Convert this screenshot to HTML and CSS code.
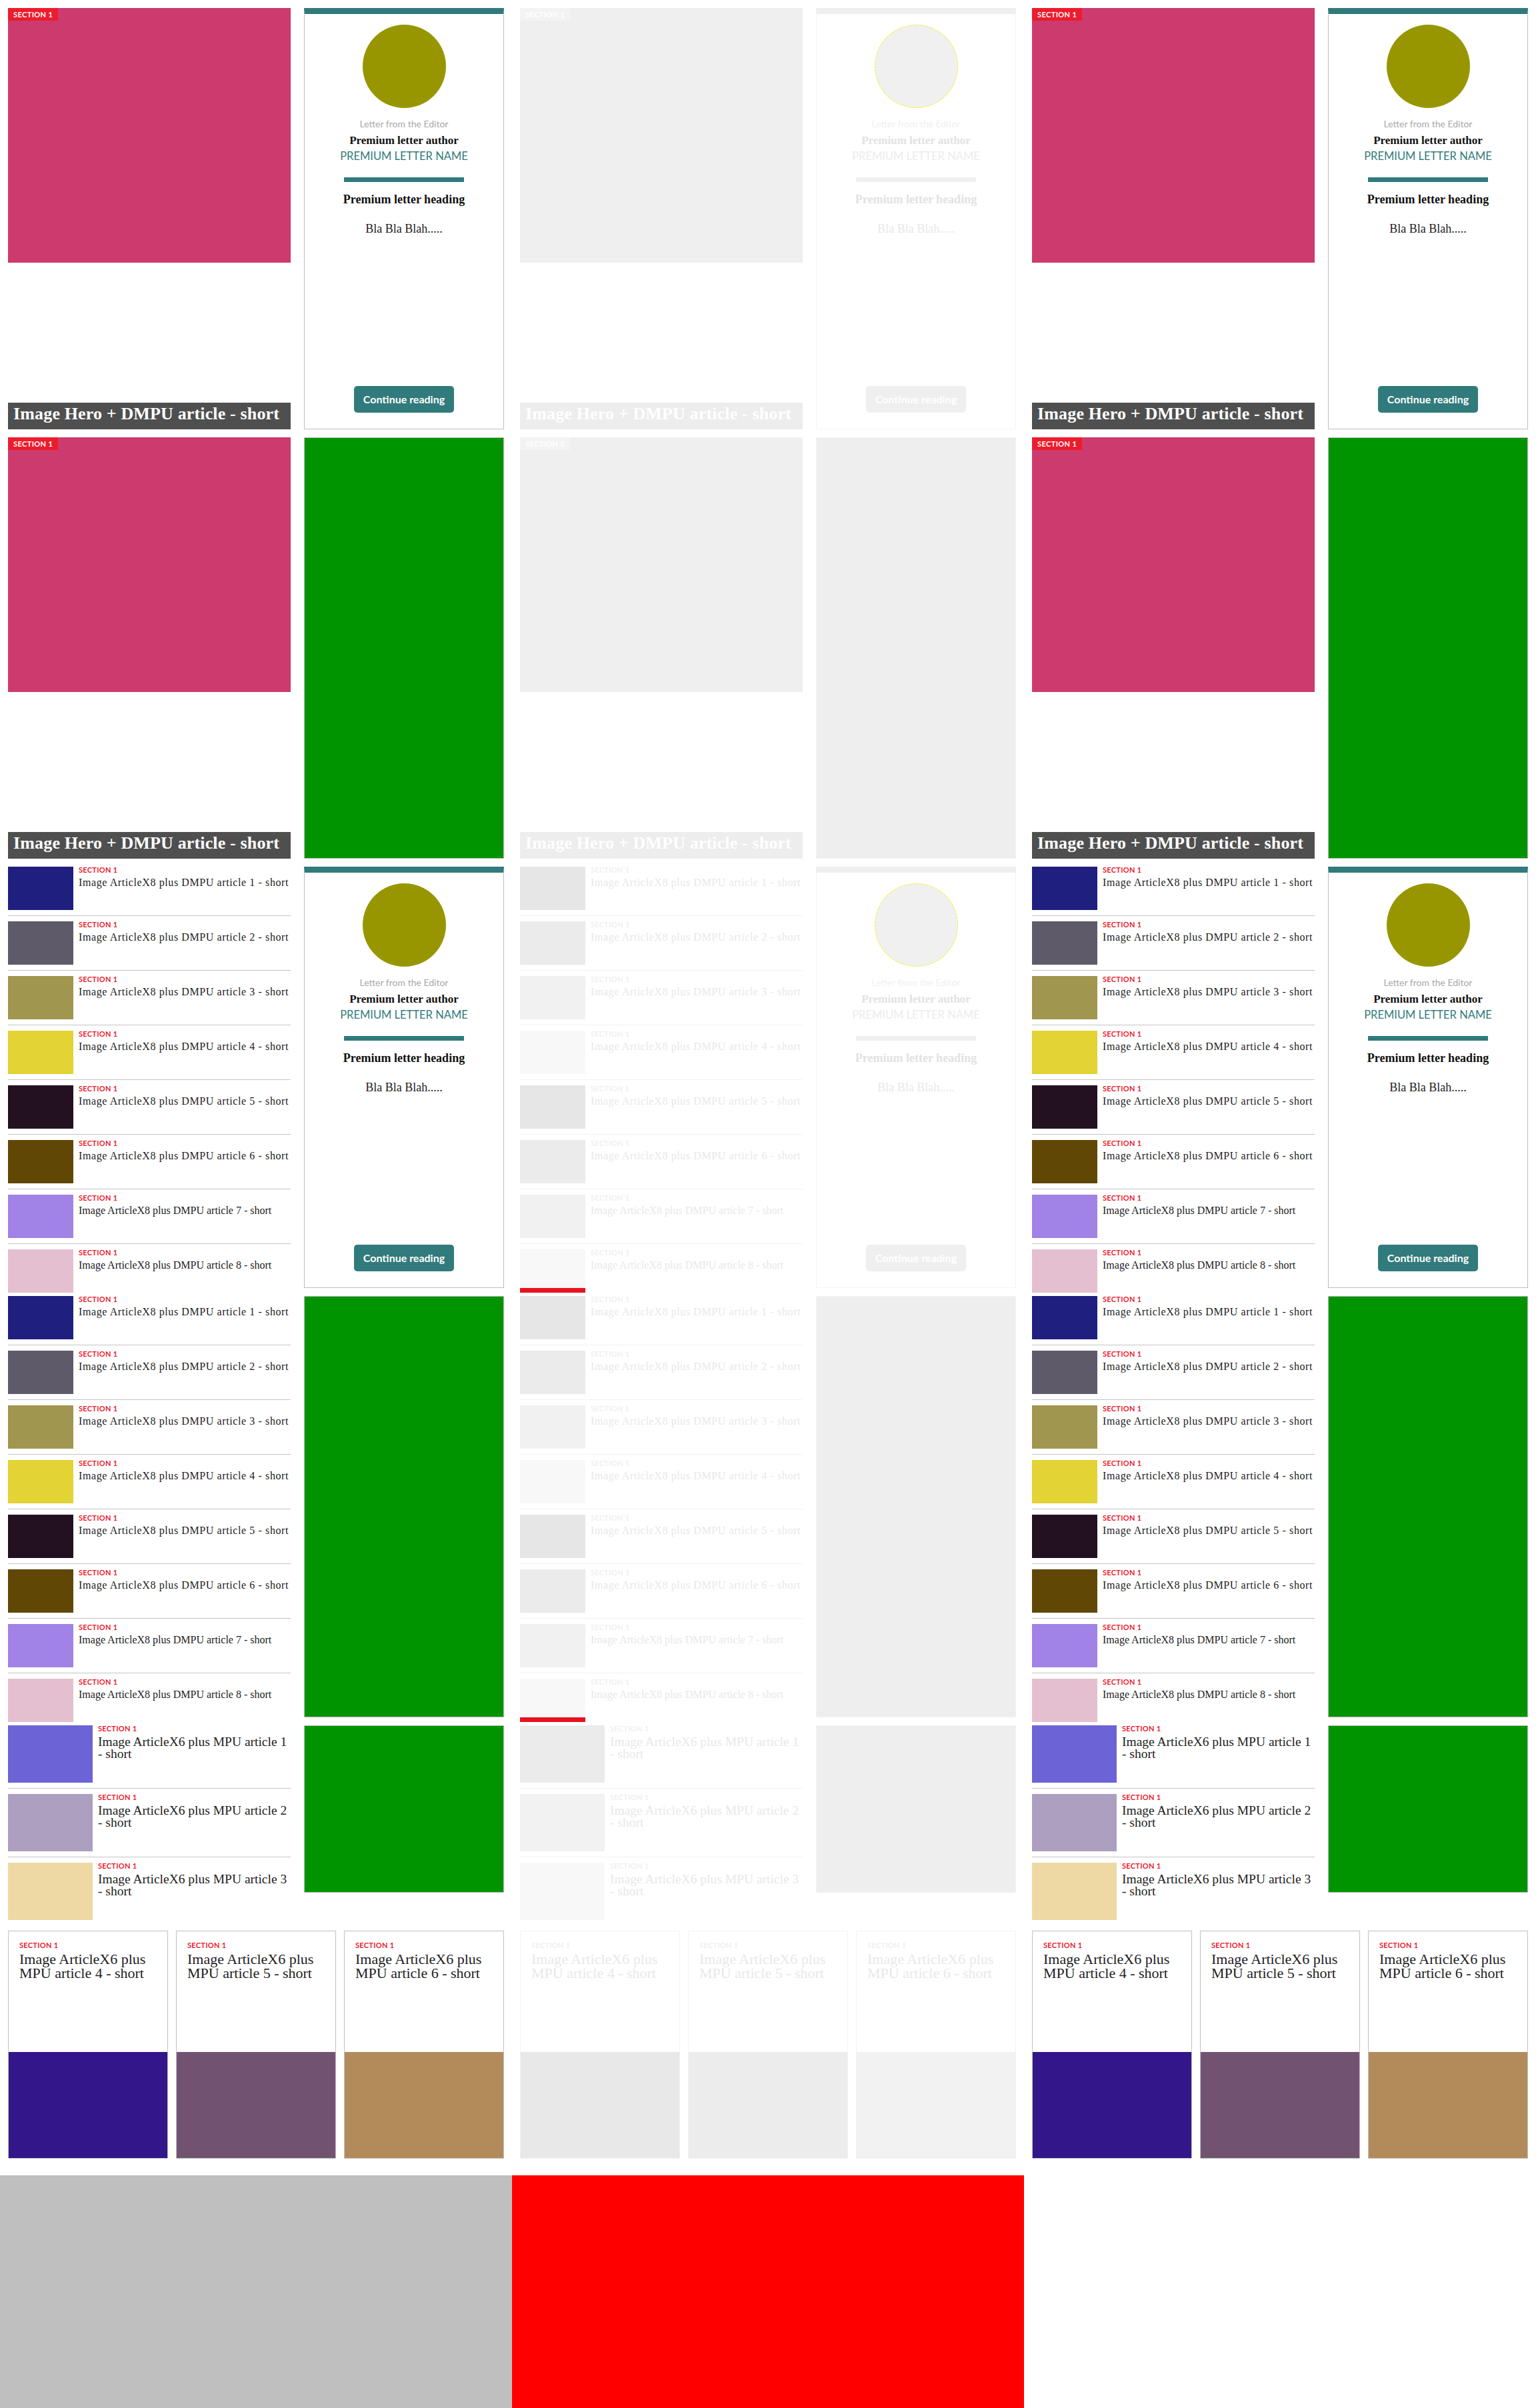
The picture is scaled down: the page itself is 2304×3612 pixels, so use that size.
FILE: index.html
```html
<!DOCTYPE html>
<html lang="en">
<head>
<meta charset="utf-8">
<title>Slices</title>
<link rel="stylesheet" href="styles.css">
</head>
<body>
<div class="page">
  <div class="grid">
    <!-- COLUMN 1 -->
    <section class="col">
      <div class="row">
        <article class="hero">
          <div class="hero-img"><span class="tag">SECTION 1</span></div>
          <h2 class="hero-title">Image Hero + DMPU article - short</h2>
        </article>
        <aside class="letter">
          <div class="avatar"></div>
          <p class="letter-kicker">Letter from the Editor</p>
          <p class="letter-author">Premium letter author</p>
          <p class="letter-name">PREMIUM LETTER NAME</p>
          <div class="letter-rule"></div>
          <h3 class="letter-heading">Premium letter heading</h3>
          <p class="letter-blurb">Bla Bla Blah.....</p>
          <span class="btn">Continue reading</span>
        </aside>
      </div>
      <div class="row">
        <article class="hero">
          <div class="hero-img"><span class="tag">SECTION 1</span></div>
          <h2 class="hero-title">Image Hero + DMPU article - short</h2>
        </article>
        <div class="dmpu"></div>
      </div>
      <div class="row">
        <ul class="list8">
          <li class="item8"><div class="thumb8 s1"></div><div class="item-text"><span class="label">SECTION 1</span><h4 class="t8">Image ArticleX8 plus DMPU article 1 - short</h4></div></li>
          <li class="item8"><div class="thumb8 s2"></div><div class="item-text"><span class="label">SECTION 1</span><h4 class="t8">Image ArticleX8 plus DMPU article 2 - short</h4></div></li>
          <li class="item8"><div class="thumb8 s3"></div><div class="item-text"><span class="label">SECTION 1</span><h4 class="t8">Image ArticleX8 plus DMPU article 3 - short</h4></div></li>
          <li class="item8"><div class="thumb8 s4"></div><div class="item-text"><span class="label">SECTION 1</span><h4 class="t8">Image ArticleX8 plus DMPU article 4 - short</h4></div></li>
          <li class="item8"><div class="thumb8 s5"></div><div class="item-text"><span class="label">SECTION 1</span><h4 class="t8">Image ArticleX8 plus DMPU article 5 - short</h4></div></li>
          <li class="item8"><div class="thumb8 s6"></div><div class="item-text"><span class="label">SECTION 1</span><h4 class="t8">Image ArticleX8 plus DMPU article 6 - short</h4></div></li>
          <li class="item8"><div class="thumb8 s7"></div><div class="item-text"><span class="label">SECTION 1</span><h4 class="t8 t8--tight">Image ArticleX8 plus DMPU article 7 - short</h4></div></li>
          <li class="item8"><div class="thumb8 s8"></div><div class="item-text"><span class="label">SECTION 1</span><h4 class="t8 t8--tight">Image ArticleX8 plus DMPU article 8 - short</h4></div></li>
        </ul>
        <aside class="letter">
          <div class="avatar"></div>
          <p class="letter-kicker">Letter from the Editor</p>
          <p class="letter-author">Premium letter author</p>
          <p class="letter-name">PREMIUM LETTER NAME</p>
          <div class="letter-rule"></div>
          <h3 class="letter-heading">Premium letter heading</h3>
          <p class="letter-blurb">Bla Bla Blah.....</p>
          <span class="btn">Continue reading</span>
        </aside>
      </div>
      <div class="row">
        <ul class="list8">
          <li class="item8"><div class="thumb8 s1"></div><div class="item-text"><span class="label">SECTION 1</span><h4 class="t8">Image ArticleX8 plus DMPU article 1 - short</h4></div></li>
          <li class="item8"><div class="thumb8 s2"></div><div class="item-text"><span class="label">SECTION 1</span><h4 class="t8">Image ArticleX8 plus DMPU article 2 - short</h4></div></li>
          <li class="item8"><div class="thumb8 s3"></div><div class="item-text"><span class="label">SECTION 1</span><h4 class="t8">Image ArticleX8 plus DMPU article 3 - short</h4></div></li>
          <li class="item8"><div class="thumb8 s4"></div><div class="item-text"><span class="label">SECTION 1</span><h4 class="t8">Image ArticleX8 plus DMPU article 4 - short</h4></div></li>
          <li class="item8"><div class="thumb8 s5"></div><div class="item-text"><span class="label">SECTION 1</span><h4 class="t8">Image ArticleX8 plus DMPU article 5 - short</h4></div></li>
          <li class="item8"><div class="thumb8 s6"></div><div class="item-text"><span class="label">SECTION 1</span><h4 class="t8">Image ArticleX8 plus DMPU article 6 - short</h4></div></li>
          <li class="item8"><div class="thumb8 s7"></div><div class="item-text"><span class="label">SECTION 1</span><h4 class="t8 t8--tight">Image ArticleX8 plus DMPU article 7 - short</h4></div></li>
          <li class="item8"><div class="thumb8 s8"></div><div class="item-text"><span class="label">SECTION 1</span><h4 class="t8 t8--tight">Image ArticleX8 plus DMPU article 8 - short</h4></div></li>
        </ul>
        <div class="dmpu"></div>
      </div>
      <div class="row row--mpu">
        <ul class="list6">
          <li class="item6"><div class="thumb6 m1"></div><div class="item-text"><span class="label">SECTION 1</span><h4 class="t6">Image ArticleX6 plus MPU article 1 - short</h4></div></li>
          <li class="item6"><div class="thumb6 m2"></div><div class="item-text"><span class="label">SECTION 1</span><h4 class="t6">Image ArticleX6 plus MPU article 2 - short</h4></div></li>
          <li class="item6"><div class="thumb6 m3"></div><div class="item-text"><span class="label">SECTION 1</span><h4 class="t6">Image ArticleX6 plus MPU article 3 - short</h4></div></li>
        </ul>
        <div class="mpu"></div>
      </div>
      <div class="cards">
        <article class="card"><div class="card-body"><span class="label">SECTION 1</span><h4 class="t-card">Image ArticleX6 plus MPU article 4 - short</h4></div><div class="card-img m4"></div></article>
        <article class="card"><div class="card-body"><span class="label">SECTION 1</span><h4 class="t-card">Image ArticleX6 plus MPU article 5 - short</h4></div><div class="card-img m5"></div></article>
        <article class="card"><div class="card-body"><span class="label">SECTION 1</span><h4 class="t-card">Image ArticleX6 plus MPU article 6 - short</h4></div><div class="card-img m6"></div></article>
      </div>
    </section>

    <!-- COLUMN 2 (loading skeleton) -->
    <section class="col col--skel">
      <div class="row">
        <article class="hero">
          <div class="hero-img"><span class="tag">SECTION 1</span></div>
          <h2 class="hero-title">Image Hero + DMPU article - short</h2>
        </article>
        <aside class="letter">
          <div class="avatar"></div>
          <p class="letter-kicker">Letter from the Editor</p>
          <p class="letter-author">Premium letter author</p>
          <p class="letter-name">PREMIUM LETTER NAME</p>
          <div class="letter-rule"></div>
          <h3 class="letter-heading">Premium letter heading</h3>
          <p class="letter-blurb">Bla Bla Blah.....</p>
          <span class="btn">Continue reading</span>
        </aside>
      </div>
      <div class="row">
        <article class="hero">
          <div class="hero-img"><span class="tag">SECTION 1</span></div>
          <h2 class="hero-title">Image Hero + DMPU article - short</h2>
        </article>
        <div class="dmpu"></div>
      </div>
      <div class="row">
        <ul class="list8">
          <li class="item8"><div class="thumb8 s1"></div><div class="item-text"><span class="label">SECTION 1</span><h4 class="t8">Image ArticleX8 plus DMPU article 1 - short</h4></div></li>
          <li class="item8"><div class="thumb8 s2"></div><div class="item-text"><span class="label">SECTION 1</span><h4 class="t8">Image ArticleX8 plus DMPU article 2 - short</h4></div></li>
          <li class="item8"><div class="thumb8 s3"></div><div class="item-text"><span class="label">SECTION 1</span><h4 class="t8">Image ArticleX8 plus DMPU article 3 - short</h4></div></li>
          <li class="item8"><div class="thumb8 s4"></div><div class="item-text"><span class="label">SECTION 1</span><h4 class="t8">Image ArticleX8 plus DMPU article 4 - short</h4></div></li>
          <li class="item8"><div class="thumb8 s5"></div><div class="item-text"><span class="label">SECTION 1</span><h4 class="t8">Image ArticleX8 plus DMPU article 5 - short</h4></div></li>
          <li class="item8"><div class="thumb8 s6"></div><div class="item-text"><span class="label">SECTION 1</span><h4 class="t8">Image ArticleX8 plus DMPU article 6 - short</h4></div></li>
          <li class="item8"><div class="thumb8 s7"></div><div class="item-text"><span class="label">SECTION 1</span><h4 class="t8 t8--tight">Image ArticleX8 plus DMPU article 7 - short</h4></div></li>
          <li class="item8"><div class="thumb8 s8"></div><div class="item-text"><span class="label">SECTION 1</span><h4 class="t8 t8--tight">Image ArticleX8 plus DMPU article 8 - short</h4></div></li>
        </ul>
        <aside class="letter">
          <div class="avatar"></div>
          <p class="letter-kicker">Letter from the Editor</p>
          <p class="letter-author">Premium letter author</p>
          <p class="letter-name">PREMIUM LETTER NAME</p>
          <div class="letter-rule"></div>
          <h3 class="letter-heading">Premium letter heading</h3>
          <p class="letter-blurb">Bla Bla Blah.....</p>
          <span class="btn">Continue reading</span>
        </aside>
      </div>
      <div class="row">
        <ul class="list8">
          <li class="item8"><div class="thumb8 s1"></div><div class="item-text"><span class="label">SECTION 1</span><h4 class="t8">Image ArticleX8 plus DMPU article 1 - short</h4></div></li>
          <li class="item8"><div class="thumb8 s2"></div><div class="item-text"><span class="label">SECTION 1</span><h4 class="t8">Image ArticleX8 plus DMPU article 2 - short</h4></div></li>
          <li class="item8"><div class="thumb8 s3"></div><div class="item-text"><span class="label">SECTION 1</span><h4 class="t8">Image ArticleX8 plus DMPU article 3 - short</h4></div></li>
          <li class="item8"><div class="thumb8 s4"></div><div class="item-text"><span class="label">SECTION 1</span><h4 class="t8">Image ArticleX8 plus DMPU article 4 - short</h4></div></li>
          <li class="item8"><div class="thumb8 s5"></div><div class="item-text"><span class="label">SECTION 1</span><h4 class="t8">Image ArticleX8 plus DMPU article 5 - short</h4></div></li>
          <li class="item8"><div class="thumb8 s6"></div><div class="item-text"><span class="label">SECTION 1</span><h4 class="t8">Image ArticleX8 plus DMPU article 6 - short</h4></div></li>
          <li class="item8"><div class="thumb8 s7"></div><div class="item-text"><span class="label">SECTION 1</span><h4 class="t8 t8--tight">Image ArticleX8 plus DMPU article 7 - short</h4></div></li>
          <li class="item8"><div class="thumb8 s8"></div><div class="item-text"><span class="label">SECTION 1</span><h4 class="t8 t8--tight">Image ArticleX8 plus DMPU article 8 - short</h4></div></li>
        </ul>
        <div class="dmpu"></div>
      </div>
      <div class="row row--mpu">
        <ul class="list6">
          <li class="item6"><div class="thumb6 m1"></div><div class="item-text"><span class="label">SECTION 1</span><h4 class="t6">Image ArticleX6 plus MPU article 1 - short</h4></div></li>
          <li class="item6"><div class="thumb6 m2"></div><div class="item-text"><span class="label">SECTION 1</span><h4 class="t6">Image ArticleX6 plus MPU article 2 - short</h4></div></li>
          <li class="item6"><div class="thumb6 m3"></div><div class="item-text"><span class="label">SECTION 1</span><h4 class="t6">Image ArticleX6 plus MPU article 3 - short</h4></div></li>
        </ul>
        <div class="mpu"></div>
      </div>
      <div class="cards">
        <article class="card"><div class="card-body"><span class="label">SECTION 1</span><h4 class="t-card">Image ArticleX6 plus MPU article 4 - short</h4></div><div class="card-img m4"></div></article>
        <article class="card"><div class="card-body"><span class="label">SECTION 1</span><h4 class="t-card">Image ArticleX6 plus MPU article 5 - short</h4></div><div class="card-img m5"></div></article>
        <article class="card"><div class="card-body"><span class="label">SECTION 1</span><h4 class="t-card">Image ArticleX6 plus MPU article 6 - short</h4></div><div class="card-img m6"></div></article>
      </div>
    </section>

    <!-- COLUMN 3 -->
    <section class="col">
      <div class="row">
        <article class="hero">
          <div class="hero-img"><span class="tag">SECTION 1</span></div>
          <h2 class="hero-title">Image Hero + DMPU article - short</h2>
        </article>
        <aside class="letter">
          <div class="avatar"></div>
          <p class="letter-kicker">Letter from the Editor</p>
          <p class="letter-author">Premium letter author</p>
          <p class="letter-name">PREMIUM LETTER NAME</p>
          <div class="letter-rule"></div>
          <h3 class="letter-heading">Premium letter heading</h3>
          <p class="letter-blurb">Bla Bla Blah.....</p>
          <span class="btn">Continue reading</span>
        </aside>
      </div>
      <div class="row">
        <article class="hero">
          <div class="hero-img"><span class="tag">SECTION 1</span></div>
          <h2 class="hero-title">Image Hero + DMPU article - short</h2>
        </article>
        <div class="dmpu"></div>
      </div>
      <div class="row">
        <ul class="list8">
          <li class="item8"><div class="thumb8 s1"></div><div class="item-text"><span class="label">SECTION 1</span><h4 class="t8">Image ArticleX8 plus DMPU article 1 - short</h4></div></li>
          <li class="item8"><div class="thumb8 s2"></div><div class="item-text"><span class="label">SECTION 1</span><h4 class="t8">Image ArticleX8 plus DMPU article 2 - short</h4></div></li>
          <li class="item8"><div class="thumb8 s3"></div><div class="item-text"><span class="label">SECTION 1</span><h4 class="t8">Image ArticleX8 plus DMPU article 3 - short</h4></div></li>
          <li class="item8"><div class="thumb8 s4"></div><div class="item-text"><span class="label">SECTION 1</span><h4 class="t8">Image ArticleX8 plus DMPU article 4 - short</h4></div></li>
          <li class="item8"><div class="thumb8 s5"></div><div class="item-text"><span class="label">SECTION 1</span><h4 class="t8">Image ArticleX8 plus DMPU article 5 - short</h4></div></li>
          <li class="item8"><div class="thumb8 s6"></div><div class="item-text"><span class="label">SECTION 1</span><h4 class="t8">Image ArticleX8 plus DMPU article 6 - short</h4></div></li>
          <li class="item8"><div class="thumb8 s7"></div><div class="item-text"><span class="label">SECTION 1</span><h4 class="t8 t8--tight">Image ArticleX8 plus DMPU article 7 - short</h4></div></li>
          <li class="item8"><div class="thumb8 s8"></div><div class="item-text"><span class="label">SECTION 1</span><h4 class="t8 t8--tight">Image ArticleX8 plus DMPU article 8 - short</h4></div></li>
        </ul>
        <aside class="letter">
          <div class="avatar"></div>
          <p class="letter-kicker">Letter from the Editor</p>
          <p class="letter-author">Premium letter author</p>
          <p class="letter-name">PREMIUM LETTER NAME</p>
          <div class="letter-rule"></div>
          <h3 class="letter-heading">Premium letter heading</h3>
          <p class="letter-blurb">Bla Bla Blah.....</p>
          <span class="btn">Continue reading</span>
        </aside>
      </div>
      <div class="row">
        <ul class="list8">
          <li class="item8"><div class="thumb8 s1"></div><div class="item-text"><span class="label">SECTION 1</span><h4 class="t8">Image ArticleX8 plus DMPU article 1 - short</h4></div></li>
          <li class="item8"><div class="thumb8 s2"></div><div class="item-text"><span class="label">SECTION 1</span><h4 class="t8">Image ArticleX8 plus DMPU article 2 - short</h4></div></li>
          <li class="item8"><div class="thumb8 s3"></div><div class="item-text"><span class="label">SECTION 1</span><h4 class="t8">Image ArticleX8 plus DMPU article 3 - short</h4></div></li>
          <li class="item8"><div class="thumb8 s4"></div><div class="item-text"><span class="label">SECTION 1</span><h4 class="t8">Image ArticleX8 plus DMPU article 4 - short</h4></div></li>
          <li class="item8"><div class="thumb8 s5"></div><div class="item-text"><span class="label">SECTION 1</span><h4 class="t8">Image ArticleX8 plus DMPU article 5 - short</h4></div></li>
          <li class="item8"><div class="thumb8 s6"></div><div class="item-text"><span class="label">SECTION 1</span><h4 class="t8">Image ArticleX8 plus DMPU article 6 - short</h4></div></li>
          <li class="item8"><div class="thumb8 s7"></div><div class="item-text"><span class="label">SECTION 1</span><h4 class="t8 t8--tight">Image ArticleX8 plus DMPU article 7 - short</h4></div></li>
          <li class="item8"><div class="thumb8 s8"></div><div class="item-text"><span class="label">SECTION 1</span><h4 class="t8 t8--tight">Image ArticleX8 plus DMPU article 8 - short</h4></div></li>
        </ul>
        <div class="dmpu"></div>
      </div>
      <div class="row row--mpu">
        <ul class="list6">
          <li class="item6"><div class="thumb6 m1"></div><div class="item-text"><span class="label">SECTION 1</span><h4 class="t6">Image ArticleX6 plus MPU article 1 - short</h4></div></li>
          <li class="item6"><div class="thumb6 m2"></div><div class="item-text"><span class="label">SECTION 1</span><h4 class="t6">Image ArticleX6 plus MPU article 2 - short</h4></div></li>
          <li class="item6"><div class="thumb6 m3"></div><div class="item-text"><span class="label">SECTION 1</span><h4 class="t6">Image ArticleX6 plus MPU article 3 - short</h4></div></li>
        </ul>
        <div class="mpu"></div>
      </div>
      <div class="cards">
        <article class="card"><div class="card-body"><span class="label">SECTION 1</span><h4 class="t-card">Image ArticleX6 plus MPU article 4 - short</h4></div><div class="card-img m4"></div></article>
        <article class="card"><div class="card-body"><span class="label">SECTION 1</span><h4 class="t-card">Image ArticleX6 plus MPU article 5 - short</h4></div><div class="card-img m5"></div></article>
        <article class="card"><div class="card-body"><span class="label">SECTION 1</span><h4 class="t-card">Image ArticleX6 plus MPU article 6 - short</h4></div><div class="card-img m6"></div></article>
      </div>
    </section>
  </div>

  <div class="grid ads">
    <div class="ad ad--gray"></div>
    <div class="ad ad--red"></div>
    <div class="ad"></div>
  </div>
</div>
</body>
</html>
```

FILE: styles.css
```css
* { box-sizing: border-box; margin: 0; padding: 0; }
html, body { margin: 0; background: #fff; }
body { font-family: "Liberation Serif", serif; }

.page { width: 2304px; }
.grid { display: grid; grid-template-columns: repeat(3, 768px); }

.col { display: flex; flex-direction: column; padding: 12px 12px 25px; }
.row { display: flex; gap: 20px; height: 632px; }
.row + .row { margin-top: 12px; }
.row--mpu { height: 292px; align-items: flex-start; }

/* hero */
.hero { width: 424px; flex: none; display: flex; flex-direction: column; }
.hero-img { position: relative; height: 382px; background: #cd3a6e; }
.tag {
  position: absolute; left: 0; top: 0;
  height: 19px; padding: 0 8px;
  background: #ec1c2d; color: #fff;
  font: 700 11px/19px Lato, sans-serif; letter-spacing: 0.4px;
}
.hero-title {
  margin-top: auto; height: 40px; padding: 0 8px;
  background: #4f4f4f; color: #fff;
  font: 700 26px/33px "Liberation Serif", serif; letter-spacing: 0.15px;
  white-space: nowrap; overflow: hidden;
}

/* letter card */
.letter {
  width: 300px; height: 632px; flex: none;
  border: 1px solid #bdbdbd; border-top: 9px solid #317b7c;
  display: flex; flex-direction: column; align-items: center; text-align: center;
}
.avatar { width: 125px; height: 125px; flex: none; border-radius: 50%; background: #989600; margin-top: 16px; }
.letter-kicker { margin-top: 15px; font: 400 14px/18px Lato, sans-serif; color: #a8a8a8; }
.letter-author { margin-top: 6px; font: 700 17px/20px "Liberation Serif", serif; color: #111; }
.letter-name { margin-top: 2px; font: 400 16.5px/22px Lato, sans-serif; color: #317b7c; }
.letter-rule { margin-top: 21px; width: 180px; height: 7px; flex: none; background: #317b7c; }
.letter-heading { margin-top: 15px; font: 700 18px/22px "Liberation Serif", serif; color: #111; }
.letter-blurb { margin-top: 22px; font: 400 18px/22px "Liberation Serif", serif; color: #222; }
.btn {
  display: block; margin-top: auto; margin-bottom: 24px;
  width: 150px; height: 40px; border-radius: 5px;
  background: #317b7c; color: #fff;
  font: 700 16px/40px Lato, sans-serif;
}

/* ads */
.dmpu { width: 300px; height: 632px; flex: none; background: #009400; border: 1px solid #b8b8b8; }
.mpu { width: 300px; height: 251px; flex: none; background: #009400; border: 1px solid #b8b8b8; }

/* shared labels */
.label { display: block; font: 700 11px/10px Lato, sans-serif; color: #ed1c2e; letter-spacing: 0.3px; }
.item-text { margin-left: 8px; min-width: 0; flex: 1; }

/* X8 list */
.list8 { width: 424px; flex: none; list-style: none; }
.item8 { display: flex; padding: 8px 0; border-bottom: 1px solid #c4c4c4; }
.item8:first-child { padding-top: 0; }
.item8:last-child { padding-bottom: 0; border-bottom: 0; }
.thumb8 { width: 98px; height: 65px; flex: none; position: relative; }
.t8 { margin-top: 4px; font: 400 16px/20px "Liberation Serif", serif; color: #222; letter-spacing: 0.6px; white-space: nowrap; }
.t8--tight { letter-spacing: 0; }

/* X6 list */
.list6 { width: 424px; flex: none; list-style: none; }
.item6 { display: flex; padding: 8px 0; border-bottom: 1px solid #c4c4c4; }
.item6:first-child { padding-top: 0; }
.item6:last-child { padding-bottom: 0; border-bottom: 0; }
.thumb6 { width: 127px; height: 86px; flex: none; }
.t6 { margin-top: 6px; font: 400 19.5px/17.5px "Liberation Serif", serif; color: #222; }

/* cards */
.cards { display: flex; gap: 12px; margin-top: 16px; height: 342px; }
.card { width: 240px; height: 342px; border: 1px solid #c2c2c2; display: flex; flex-direction: column; }
.card-body { height: 181px; padding: 16px 16px 0; }
.card-img { height: 159px; }
.t-card { margin-top: 5px; font: 400 22px/21px "Liberation Serif", serif; color: #222; }

/* swatches */
.s1 { background: #1f1f80; }
.s2 { background: #5e5a6a; }
.s3 { background: #a19650; }
.s4 { background: #e3d334; }
.s5 { background: #231020; }
.s6 { background: #614705; }
.s7 { background: #a182e6; }
.s8 { background: #e4bfcf; }
.m1 { background: #6c63d6; }
.m2 { background: #ad9fc0; }
.m3 { background: #eed9a4; }
.m4 { background: #33168a; }
.m5 { background: #725271; }
.m6 { background: #b38b5b; }

/* bottom ads row */
.ads { height: 349px; }
.ad--gray { background: #bfbfbf; }
.ad--red { background: #ff0000; }

/* skeleton (loading) column */
.col--skel .hero-img { background: #efefef; }
.col--skel .tag { background: #f3f3f3; color: #fff; }
.col--skel .hero-title { background: #ededed; color: #fff; }
.col--skel .letter { border-color: #f3f3f3; border-top-color: #efefef; }
.col--skel .avatar { background: #f0f0f0; border: 1px dashed #f5f000; }
.col--skel .letter-kicker { color: #f0f0f0; }
.col--skel .letter-author { color: #e2e2e2; }
.col--skel .letter-name { color: #ececec; }
.col--skel .letter-rule { background: #efefef; }
.col--skel .letter-heading { color: #e2e2e2; }
.col--skel .letter-blurb { color: #e8e8e8; }
.col--skel .btn { background: #efefef; color: #fff; }
.col--skel .dmpu, .col--skel .mpu { background: #eeeeee; border-color: #f3f3f3; }
.col--skel .label { color: #f0f0f0; }
.col--skel .t8, .col--skel .t6, .col--skel .t-card { color: #e8e8e8; }
.col--skel .item8, .col--skel .item6 { border-color: #f2f2f2; }
.col--skel .card { border-color: #f2f2f2; }
.col--skel .item8:nth-child(4n+1) .thumb8 { background: #e6e6e6; }
.col--skel .item8:nth-child(4n+2) .thumb8 { background: #ebebeb; }
.col--skel .item8:nth-child(4n+3) .thumb8 { background: #f1f1f1; }
.col--skel .item8:nth-child(4n) .thumb8 { background: #f8f8f8; }
/* part of the last skeleton thumb that spills past the row */
.col--skel .item8:last-child .thumb8::after {
  content: ""; position: absolute; left: 0; right: 0; top: 58px; height: 7px; background: #e8121f;
}
.col--skel .item6:nth-child(1) .thumb6 { background: #ebebeb; }
.col--skel .item6:nth-child(2) .thumb6 { background: #f2f2f2; }
.col--skel .item6:nth-child(3) .thumb6 { background: #f8f8f8; }
.col--skel .card:nth-child(1) .card-img { background: #e8e8e8; }
.col--skel .card:nth-child(2) .card-img { background: #ececec; }
.col--skel .card:nth-child(3) .card-img { background: #f2f2f2; }
```
